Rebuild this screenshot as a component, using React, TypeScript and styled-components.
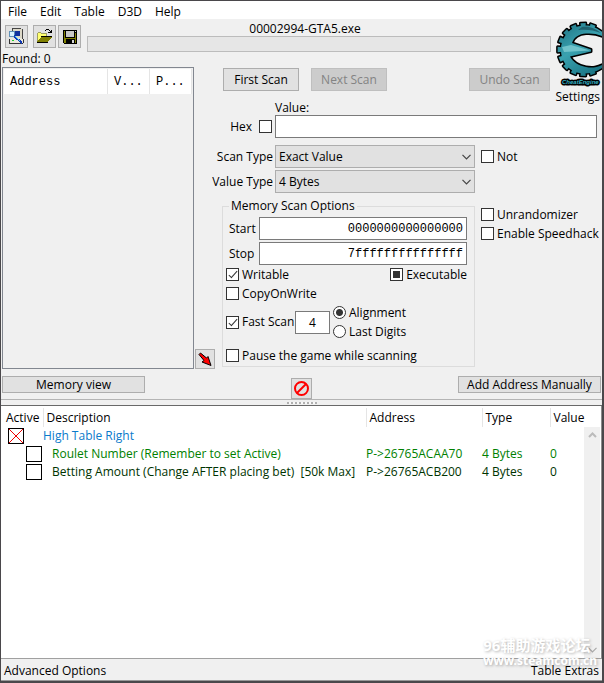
import React from "react";
import styled, { createGlobalStyle, css } from "styled-components";

const GlobalStyle = createGlobalStyle`
  *, *::before, *::after { box-sizing: border-box; }
  body { margin: 0; background: #f0f0f0; }
  body, button, input, select, table {
    font-family: "Open Sans", "Noto Sans", sans-serif;
    font-size: 12px;
    line-height: 14px;
    color: #000;
  }
`;

const mono = css`
  font-family: "Liberation Mono", "Courier New", monospace;
`;

const Window = styled.div`
  position: relative;
  display: flex;
  flex-direction: column;
  min-height: 100vh;
  border: solid #4a484b;
  border-width: 1px 2px 2px 1px;
  background: #f0f0f0;
  overflow: hidden;
`;

const MenuBar = styled.nav`
  display: flex;
  gap: 13px;
  height: 18px;
  padding: 3px 7px 0;
  background: #fff;
`;

const MenuItem = styled.button`
  padding: 0;
  border: 0;
  background: none;
`;

const Scanner = styled.main`
  display: grid;
  grid-template-columns: 214px minmax(0, 1fr) 50px;
  grid-template-rows: 33px 49px auto;
`;

const Toolbar = styled.div`
  grid-column: 1 / 3;
  display: flex;
  padding: 0 1px 0 4px;
`;

const ToolButton = styled.button<{ $size?: number; $spaced?: boolean }>`
  display: flex;
  align-items: center;
  justify-content: center;
  flex: none;
  width: ${(p) => p.$size ?? 23}px;
  height: ${(p) => p.$size ?? 23}px;
  margin-right: ${(p) => (p.$spaced ? 3 : 0)}px;
  padding: 0;
  border: 1px solid #adadad;
  background: #e1e1e1;
`;

const ToolGroup = styled.div`
  display: flex;
  align-items: flex-start;
  gap: 2px;
  width: 82px;
  padding-top: 6px;
`;

const Process = styled.div`
  flex: 1;
  padding-top: 3px;
  text-align: center;
`;

const ProcessName = styled.div`
  padding-right: 28px;
`;

const ProgressBar = styled.div`
  height: 16px;
  border: 1px solid #bcbcbc;
  background: #e6e6e6;
`;

const Settings = styled.a`
  grid-column: 3;
  grid-row: 1 / 3;
  display: flex;
  flex-direction: column;
  align-items: flex-end;
  padding-top: 2px;
  color: #000;
  text-decoration: none;
  white-space: nowrap;

  svg { flex: none; }
  span { padding: 2px 2px 0 0; }
`;

const Results = styled.section`
  grid-column: 1;
  grid-row: 2 / 4;
  display: grid;
  grid-template-columns: 192px 20px;
  grid-template-rows: 15px 1fr;
  column-gap: 1px;
  align-items: end;
  padding-left: 1px;
`;

const Found = styled.div`
  grid-column: 1 / 3;
  align-self: start;
`;

const ResultList = styled.div`
  align-self: stretch;
  padding: 1px;
  border: 1px solid #828790;
`;

const ResultTable = styled.table`
  ${mono}
  width: 100%;
  table-layout: fixed;
  border-collapse: collapse;
  background: #fff;

  th {
    ${mono}
    height: 25px;
    padding: 0 0 0 6px;
    border-right: 1px solid #e5e5e5;
    font-weight: 400;
    text-align: left;
  }
`;

const ScanButtons = styled.div`
  grid-column: 2;
  display: flex;
  gap: 12px;
  padding: 16px 2px 0 8px;
`;

const PushButton = styled.button<{ $width: number; $end?: boolean; $slim?: boolean }>`
  width: ${(p) => p.$width}px;
  height: ${(p) => (p.$slim ? 17 : 23)}px;
  margin-left: ${(p) => (p.$end ? "auto" : "0")};
  padding: 0;
  border: 1px solid #adadad;
  background: #e1e1e1;
  line-height: 14px;
  white-space: nowrap;

  &:disabled {
    border-color: #bfbfbf;
    background: #ccc;
    color: #838383;
  }
`;

const Form = styled.div`
  grid-column: 2 / 4;
  grid-row: 3;
  padding: 0 5px 2px 0;
`;

const FieldRow = styled.div<{ $gap?: number }>`
  display: grid;
  grid-template-columns: 58px 200px minmax(0, 1fr);
  column-gap: 2px;
  align-items: center;
  margin-bottom: ${(p) => p.$gap ?? 0}px;
`;

const FieldLabel = styled.label`
  justify-self: end;
  white-space: nowrap;
`;

const ValueLabel = styled.label`
  display: block;
  padding-left: 60px;
`;

const HexLabel = styled.label`
  display: flex;
  align-items: center;
  justify-content: flex-end;
  gap: 7px;
  padding-right: 1px;
`;

const TextInput = styled.input<{ $align?: string; $mono?: boolean }>`
  ${(p) => p.$mono && mono}
  width: 100%;
  min-width: 0;
  height: 23px;
  padding: 0 3px;
  border: 1px solid #7a7a7a;
  border-radius: 0;
  background: #fff;
  text-align: ${(p) => p.$align ?? "left"};
`;

const ValueInput = styled(TextInput)`
  grid-column: 2 / 4;
`;

const SelectBox = styled.div`
  position: relative;

  svg {
    position: absolute;
    right: 4px;
    top: 9px;
    pointer-events: none;
  }
`;

const Select = styled.select`
  appearance: none;
  display: block;
  width: 100%;
  height: 23px;
  padding: 0 20px 0 3px;
  border: 1px solid #adadad;
  border-radius: 0;
  background: #e1e1e1;
`;

const CheckLabel = styled.label`
  display: flex;
  align-items: center;
  gap: 3px;
  height: 19px;
  white-space: nowrap;
`;

const NotLabel = styled(CheckLabel)`
  padding-left: 4px;
`;

const CheckBox = styled.input<{ $mixed?: boolean }>`
  appearance: none;
  position: relative;
  flex: none;
  width: 13px;
  height: 13px;
  margin: 0;
  border: 1px solid #333;
  background: #fff;

  ${(p) =>
    p.$mixed
      ? css`
          &::after {
            content: "";
            position: absolute;
            inset: 2px;
            background: #333;
          }
        `
      : css`
          &:checked::after {
            content: "";
            position: absolute;
            left: 4px;
            top: 0;
            width: 4px;
            height: 9px;
            border: solid #333;
            border-width: 0 1px 1px 0;
            transform: rotate(42deg);
          }
        `}
`;

const Radio = styled.input`
  appearance: none;
  flex: none;
  width: 13px;
  height: 13px;
  margin: 0;
  border: 1px solid #333;
  border-radius: 50%;
  background: #fff;

  &:checked {
    background: radial-gradient(circle, #333 0 3px, #fff 4px);
  }
`;

const OptionsRow = styled.div`
  display: grid;
  grid-template-columns: 253px 1fr;
  column-gap: 6px;
  padding-left: 7px;
`;

const OptionGroup = styled.fieldset`
  min-width: 0;
  margin: 0;
  padding: 4px 7px 1px 3px;
  border: 1px solid #dcdcdc;

  legend {
    margin-left: 3px;
    padding: 0 2px;
  }
`;

const RangeRow = styled.div`
  display: grid;
  grid-template-columns: 30px 1fr;
  column-gap: 3px;
  align-items: center;
  margin-bottom: 2px;

  label { padding-left: 3px; }
`;

const Split = styled.div`
  display: flex;
  justify-content: space-between;
  margin-top: -2px;
`;

const FastRow = styled.div`
  display: grid;
  grid-template-columns: 66px 35px auto;
  column-gap: 3px;
  align-items: center;
  margin-bottom: 5px;
`;

const SideOptions = styled.div`
  padding-top: 6px;
`;

const Actions = styled.div`
  display: grid;
  grid-template-columns: 1fr 21px 1fr;
  align-items: start;
  padding: 7px 1px 0 1px;
`;

const StopWrap = styled.div`
  padding-top: 2px;
`;

const Splitter = styled.div`
  display: flex;
  justify-content: center;
  align-items: center;
  height: 7px;
  border-top: 1px solid #b4b4b4;
  border-bottom: 1px solid #696969;
`;

const Grip = styled.span`
  width: 30px;
  height: 2px;
  background: repeating-linear-gradient(90deg, #b0b0b0 0 2px, #f8f8f8 2px 4px);
`;

const TablePanel = styled.section`
  display: flex;
  flex: 1;
  border-right: 1px solid #8c8c8c;
  border-bottom: 1px solid #a0a0a0;
  background: #fff;
`;

const TableArea = styled.div`
  flex: 1;
  min-width: 0;
  padding-top: 2px;
`;

const CheatTable = styled.table`
  width: 100%;
  table-layout: fixed;
  border-collapse: collapse;
  white-space: nowrap;

  th {
    height: 19px;
    padding: 0 0 0 3px;
    border-right: 1px solid #e5e5e5;
    font-weight: 400;
    text-align: left;
  }
  th:first-child { padding-left: 5px; }
  th:last-child { border-right: 0; }
  td { height: 18px; padding: 0; }
`;

const Entry = styled.tr<{ $color: string; $child?: boolean }>`
  td { color: ${(p) => p.$color}; }
  td:nth-child(1) { padding-left: ${(p) => (p.$child ? 25 : 7)}px; }
  td:nth-child(2) { padding-left: ${(p) => (p.$child ? 9 : 0)}px; }
`;

const EntryCheck = styled.input<{ $crossed?: boolean }>`
  appearance: none;
  display: block;
  width: 16px;
  height: 16px;
  margin: 0;
  border: 1px solid #000;
  background: #fff;
  ${(p) =>
    p.$crossed &&
    css`
      background:
        linear-gradient(45deg, transparent 47%, #f00000 47% 53%, transparent 53%),
        linear-gradient(-45deg, transparent 47%, #f00000 47% 53%, transparent 53%),
        #fff;
    `}
`;

const ScrollTrack = styled.div`
  display: flex;
  flex-direction: column;
  justify-content: space-between;
  align-items: center;
  width: 16px;
  margin: 21px 1px 0 0;
  padding: 5px 0;
  background: #f0f0f0;
`;

const Footer = styled.footer`
  display: flex;
  justify-content: space-between;
  height: 22px;
  padding: 5px 3px 0;
  border-bottom: 1px solid #999;
`;

const FooterLink = styled.a`
  color: #000;
  text-decoration: none;
`;

const Watermark = styled.div`
  position: absolute;
  right: 5px;
  bottom: 13px;
  color: #fff;
  font: 700 15px/18px "Noto Sans", "Noto Sans CJK SC", sans-serif;
  text-shadow: 1px 1px 3px rgba(0, 0, 0, 0.3);
  pointer-events: none;

  div:last-child { font-size: 12px; line-height: 14px; }
`;

const ProcessIcon = () => (
  <svg width="17" height="17" viewBox="0 0 17 17" shapeRendering="crispEdges" aria-hidden="true">
    <path d="M5 0h8v1h1v10H5z" fill="#dcd8c8" />
    <path d="M4 0h9v1H4zM14 1h1v10h-1zM4 0h1v3H4z" fill="#444" />
    <path d="M6 3h6v5H6z" fill="#10309c" />
    <path d="M2 10h10l3 1v4H2z" fill="#ebe8dc" />
    <path d="M1 15h14v1H1zM15 11h1v4h-1zM1 11h1v4H1z" fill="#333" />
    <path d="M4 12h2v1H4z" fill="#20d030" />
    <circle cx="4" cy="6" r="3" fill="#d8f2ff" stroke="#6090b8" />
    <path d="M6 8l8 7" stroke="#1038b8" strokeWidth="2" />
    <path d="M7 8l5 5" stroke="#50d0ff" />
  </svg>
);

const OpenIcon = () => (
  <svg width="17" height="17" viewBox="0 0 17 17" shapeRendering="crispEdges" aria-hidden="true">
    <path d="M1 14V5h1V4h3v1h6v4H5z" fill="#ffff70" />
    <path d="M2 4h3v1H2zM1 5h1v9H1zM5 5h6v1H5zM10 6h1v3h-1z" fill="#a0a060" />
    <path d="M1 14l4-5h11l-4 5z" fill="#808000" />
    <path d="M1 14h11v1H1zM5 8h11v1H5z" fill="#000" />
    <path d="M9 2h1v1H9zM10 1h3v1h-3zM13 2h1v1h-1zM14 3h1v2h-1zM12 4h3v1h-3zM15 2h1v3h-1z" fill="#000" />
  </svg>
);

const SaveIcon = () => (
  <svg width="16" height="16" viewBox="0 0 16 16" shapeRendering="crispEdges" aria-hidden="true">
    <path d="M1 1h14v14H2l-1-1z" fill="#000" />
    <path d="M2 2h1v7h10V4h1v10H2z" fill="#808000" />
    <path d="M4 2h8v6H4z" fill="#c8c8c8" />
    <path d="M13 2h1v1h-1z" fill="#c8c8c8" />
    <path d="M4 10h9v5H4z" fill="#000" />
    <path d="M10 11h2v3h-2z" fill="#d8d8d8" />
  </svg>
);

const ArrowIcon = () => (
  <svg width="16" height="16" viewBox="0 0 16 16" aria-hidden="true">
    <path d="M2 3.5L3.5 2l6 5L11 5.500l3 9-9-3.500L7 9.500z" fill="#f00" stroke="#000" strokeLinejoin="round" />
  </svg>
);

const StopIcon = () => (
  <svg width="17" height="17" viewBox="0 0 17 17" fill="none" stroke="#f00" strokeWidth="2" aria-hidden="true">
    <circle cx="8.5" cy="8.5" r="6.5" />
    <path d="M4 13l9-9" />
  </svg>
);

const Chevron = ({ up = false, color = "#444" }: { up?: boolean; color?: string }) => (
  <svg width="9" height="6" viewBox="0 0 9 6" fill="none" stroke={color} strokeWidth={up ? 2 : 1.2} aria-hidden="true">
    <path d={up ? "M1 5l3.5-3.5L8 5" : "M.5 .8l4 4 4-4"} />
  </svg>
);

const teeth = [-70, -92, -114, -136, -158, -180, -202, -224, -246, -268, -290];

const Logo = () => (
  <svg width="46" height="67" viewBox="0 0 46 67" aria-hidden="true">
    <defs>
      <linearGradient id="teal" gradientUnits="userSpaceOnUse" x1="4" y1="4" x2="40" y2="54">
        <stop offset="0" stopColor="#1f7484" />
        <stop offset=".45" stopColor="#3aa2b0" />
        <stop offset="1" stopColor="#177080" />
      </linearGradient>
    </defs>
    {[true, false].map((outline) => (
      <g
        key={String(outline)}
        fill={outline ? "#000" : "url(#teal)"}
        stroke={outline ? "#000" : "none"}
        strokeWidth="3"
        strokeLinejoin="round"
      >
        {teeth.map((a) => {
          const r = (a * Math.PI) / 180;
          const p = (rad: number, off: number) =>
            `${28 + rad * Math.cos(r + off)} ${28.5 + rad * Math.sin(r + off)}`;
          return <path key={a} d={`M${p(22, -0.1)}L${p(26.5, -0.1)}L${p(26.5, 0.1)}L${p(22, 0.1)}Z`} />;
        })}
        <path d="M50 14C41 6 34 4 28 4.500C14 5 5 16 5 29C5 42 15 52.500 28 52.500C36 52.500 43 50 50 44L50 42C41 47 36 47 30 46C22 44.500 17 41 14 35.500L35 30.500V28.500L16 22C18 16 23 13 30 12.500C37 12 43 13 50 17Z" />
      </g>
    ))}
    <path d="M6 26L15 24L34 29.500L8 31z" fill="#7fcdd3" opacity=".8" />
    <path d="M26 6C34 5 40 8 45 12C38 9 30 8 22 9z" fill="#123f4c" opacity=".6" />
    <text
      x="6" y="63"
      fontFamily="Liberation Sans, sans-serif" fontSize="6" fontStyle="italic" fontWeight="700"
      fill="#38b4c4" stroke="#000" strokeWidth="3" strokeLinejoin="round" paintOrder="stroke"
    >
      CheatEngine
    </text>
  </svg>
);

const entries = [
  { name: "High Table Right", color: "#0a7acb", crossed: true },
  { name: "Roulet Number (Remember to set Active)", color: "#008000", child: true, address: "P->26765ACAA70", type: "4 Bytes", value: "0" },
  { name: "Betting Amount (Change AFTER placing bet)\u00a0 [50k Max]", color: "#003300", child: true, address: "P->26765ACB200", type: "4 Bytes", value: "0" },
];

export default function App() {
  return (
    <>
      <GlobalStyle />
      <Window>
        <MenuBar>
          {["File", "Edit", "Table", "D3D", "Help"].map((m) => (
            <MenuItem key={m}>{m}</MenuItem>
          ))}
        </MenuBar>

        <Scanner>
          <Toolbar>
            <ToolGroup>
              <ToolButton $spaced aria-label="Select process"><ProcessIcon /></ToolButton>
              <ToolButton aria-label="Open"><OpenIcon /></ToolButton>
              <ToolButton aria-label="Save"><SaveIcon /></ToolButton>
            </ToolGroup>
            <Process>
              <ProcessName>00002994-GTA5.exe</ProcessName>
              <ProgressBar role="progressbar" aria-label="Scan progress" aria-valuenow={0} />
            </Process>
          </Toolbar>

          <Settings href="#settings">
            <Logo />
            <span>Settings</span>
          </Settings>

          <Results>
            <Found>Found: 0</Found>
            <ResultList>
              <ResultTable>
                <colgroup><col /><col width="42" /><col width="42" /></colgroup>
                <thead>
                  <tr><th>Address</th><th>V...</th><th>P...</th></tr>
                </thead>
              </ResultTable>
            </ResultList>
            <ToolButton $size={20} aria-label="Add selected to table"><ArrowIcon /></ToolButton>
          </Results>

          <ScanButtons>
            <PushButton $width={76}>First Scan</PushButton>
            <PushButton $width={76} disabled>Next Scan</PushButton>
            <PushButton $width={81} $end disabled>Undo Scan</PushButton>
          </ScanButtons>

          <Form>
            <ValueLabel htmlFor="value">Value:</ValueLabel>
            <FieldRow $gap={7}>
              <HexLabel>Hex<CheckBox type="checkbox" /></HexLabel>
              <ValueInput id="value" type="text" />
            </FieldRow>
            <FieldRow $gap={2}>
              <FieldLabel htmlFor="scan-type">Scan Type</FieldLabel>
              <SelectBox>
                <Select id="scan-type"><option>Exact Value</option></Select>
                <Chevron />
              </SelectBox>
              <NotLabel><CheckBox type="checkbox" />Not</NotLabel>
            </FieldRow>
            <FieldRow $gap={6}>
              <FieldLabel htmlFor="value-type">Value Type</FieldLabel>
              <SelectBox>
                <Select id="value-type"><option>4 Bytes</option></Select>
                <Chevron />
              </SelectBox>
            </FieldRow>
            <OptionsRow>
              <OptionGroup>
                <legend>Memory Scan Options</legend>
                <RangeRow>
                  <label htmlFor="start">Start</label>
                  <TextInput id="start" type="text" $mono $align="right" defaultValue="0000000000000000" />
                </RangeRow>
                <RangeRow>
                  <label htmlFor="stop">Stop</label>
                  <TextInput id="stop" type="text" $mono $align="right" defaultValue="7fffffffffffffff" />
                </RangeRow>
                <Split>
                  <CheckLabel><CheckBox type="checkbox" defaultChecked />Writable</CheckLabel>
                  <CheckLabel><CheckBox type="checkbox" $mixed />Executable</CheckLabel>
                </Split>
                <CheckLabel><CheckBox type="checkbox" />CopyOnWrite</CheckLabel>
                <FastRow>
                  <CheckLabel><CheckBox type="checkbox" defaultChecked />Fast Scan</CheckLabel>
                  <TextInput type="text" aria-label="Fast scan alignment" $align="center" defaultValue="4" />
                  <div>
                    <CheckLabel><Radio type="radio" name="fast" defaultChecked />Alignment</CheckLabel>
                    <CheckLabel><Radio type="radio" name="fast" />Last Digits</CheckLabel>
                  </div>
                </FastRow>
                <CheckLabel><CheckBox type="checkbox" />Pause the game while scanning</CheckLabel>
              </OptionGroup>
              <SideOptions>
                <CheckLabel><CheckBox type="checkbox" />Unrandomizer</CheckLabel>
                <CheckLabel><CheckBox type="checkbox" />Enable Speedhack</CheckLabel>
              </SideOptions>
            </OptionsRow>
          </Form>
        </Scanner>

        <Actions>
          <PushButton $width={143} $slim>Memory view</PushButton>
          <StopWrap>
            <ToolButton $size={21} aria-label="Clear list"><StopIcon /></ToolButton>
          </StopWrap>
          <PushButton $width={143} $slim $end>Add Address Manually</PushButton>
        </Actions>

        <Splitter><Grip /></Splitter>

        <TablePanel>
          <TableArea>
            <CheatTable>
              <colgroup>
                <col width="42" /><col /><col width="116" /><col width="68" /><col width="34" />
              </colgroup>
              <thead>
                <tr><th>Active</th><th>Description</th><th>Address</th><th>Type</th><th>Value</th></tr>
              </thead>
              <tbody>
                {entries.map((e) => (
                  <Entry key={e.name} $color={e.color} $child={e.child}>
                    <td><EntryCheck type="checkbox" $crossed={e.crossed} aria-label={e.name} /></td>
                    <td>{e.name}</td>
                    <td>{e.address}</td>
                    <td>{e.type}</td>
                    <td>{e.value}</td>
                  </Entry>
                ))}
              </tbody>
            </CheatTable>
          </TableArea>
          <ScrollTrack>
            <Chevron up color="#bbb" />
            <Chevron color="#aaa" />
          </ScrollTrack>
        </TablePanel>

        <Footer>
          <FooterLink href="#advanced">Advanced Options</FooterLink>
          <FooterLink href="#extras">Table Extras</FooterLink>
        </Footer>

        <Watermark>
          <div>96辅助游戏论坛</div>
          <div>www.steamcom.cn</div>
        </Watermark>
      </Window>
    </>
  );
}
